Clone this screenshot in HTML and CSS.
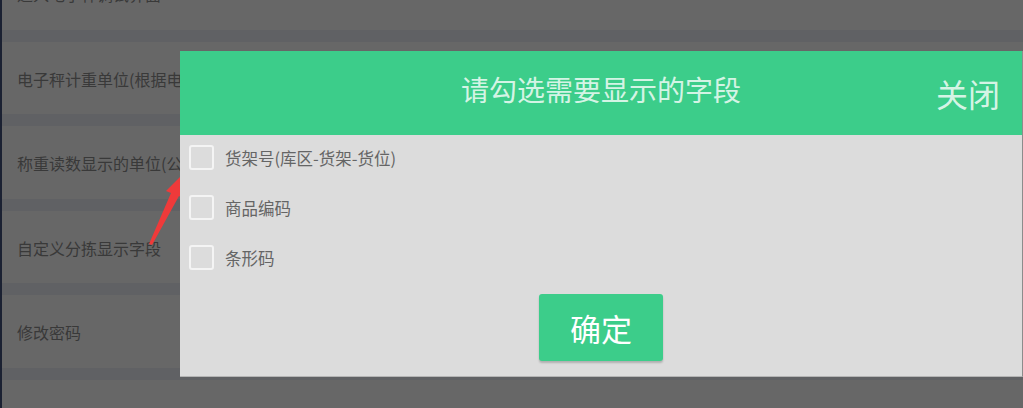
FILE: index.html
```html
<!DOCTYPE html>
<html lang="zh-CN">
<head>
  <meta charset="UTF-8">
  <meta name="viewport" content="width=device-width, initial-scale=1.0">
  <title>设置</title>
  <link rel="stylesheet" href="styles.css">
</head>
<body>
  <div class="screen">
    <ul class="settings">
      <li class="setting">进入电子秤调试界面</li>
      <li class="setting">电子秤计重单位(根据电子秤设置)</li>
      <li class="setting">称重读数显示的单位(公斤)</li>
      <li class="setting">自定义分拣显示字段</li>
      <li class="setting">修改密码</li>
    </ul>

    <svg class="arrow" width="60" height="90" viewBox="140 160 60 90">
      <polygon points="149,244 171,193 166,191 190,167 186,200 179,196 152,245" fill="#ef3a3a"/>
    </svg>

    <div class="dialog">
      <div class="dialog-header">
        <span class="dialog-title">请勾选需要显示的字段</span>
        <span class="dialog-close">关闭</span>
      </div>
      <div class="dialog-body">
        <label class="field"><span class="check"></span>货架号(库区-货架-货位)</label>
        <label class="field"><span class="check"></span>商品编码</label>
        <label class="field"><span class="check"></span>条形码</label>
        <div class="actions">
          <button class="confirm-btn">确定</button>
        </div>
      </div>
    </div>
  </div>
</body>
</html>
```

FILE: styles.css
```css
/* Settings screen with field picker dialog */
body {
  margin: 0;
  font-family: "Noto Sans CJK SC", "Noto Sans", sans-serif;
  background-color: #676767;
  overflow: hidden;
}
.screen {
  position: relative;
  width: 1023px;
  height: 408px;
  overflow: hidden;
  border-left: 2px solid #1b2132;
  box-sizing: border-box;
}
.settings {
  list-style: none;
  margin: -43px 0 0;
  padding: 0;
}
.setting {
  display: flex;
  align-items: center;
  box-sizing: border-box;
  height: 84.5px;
  padding: 2px 0 0 15px;
  border-bottom: 12.5px solid #606164;
  font-size: 16px;
  color: #393939;
}
.arrow {
  position: absolute;
  left: 138px;
  top: 160px;
}
.dialog {
  position: absolute;
  left: 178px;
  top: 51px;
  width: 842px;
  border-right: 1px solid #8c8c8c;
  border-bottom: 1px solid #b4b4b4;
  background-color: #dcdcdc;
}
.dialog-header {
  position: relative;
  height: 84px;
  background-color: #3ccd8a;
  display: flex;
  align-items: center;
  justify-content: center;
}
.dialog-title {
  font-size: 28px;
  color: rgba(255, 255, 255, 0.8);
  margin-top: -9px;
}
.dialog-close {
  position: absolute;
  right: 22px;
  top: 19px;
  font-size: 32px;
  color: rgba(255, 255, 255, 0.8);
}
.dialog-body {
  padding: 10px 0 0 9px;
  height: 231px;
}
.field {
  display: flex;
  align-items: center;
  gap: 11px;
  height: 25px;
  margin-bottom: 25px;
  font-size: 16.5px;
  color: #656565;
}
.check {
  width: 21px;
  height: 21px;
  border: 2px solid #f4f4f4;
  border-radius: 3px;
}
.actions {
  display: flex;
  justify-content: center;
  margin: -1px 0 0 -9px;
}
.confirm-btn {
  width: 124px;
  height: 67px;
  border: none;
  border-radius: 3px;
  background-color: #3ccd8a;
  color: #fff;
  font-family: inherit;
  font-size: 31px;
  box-shadow: 0 2px 2px rgba(0, 0, 0, 0.2);
}
```
